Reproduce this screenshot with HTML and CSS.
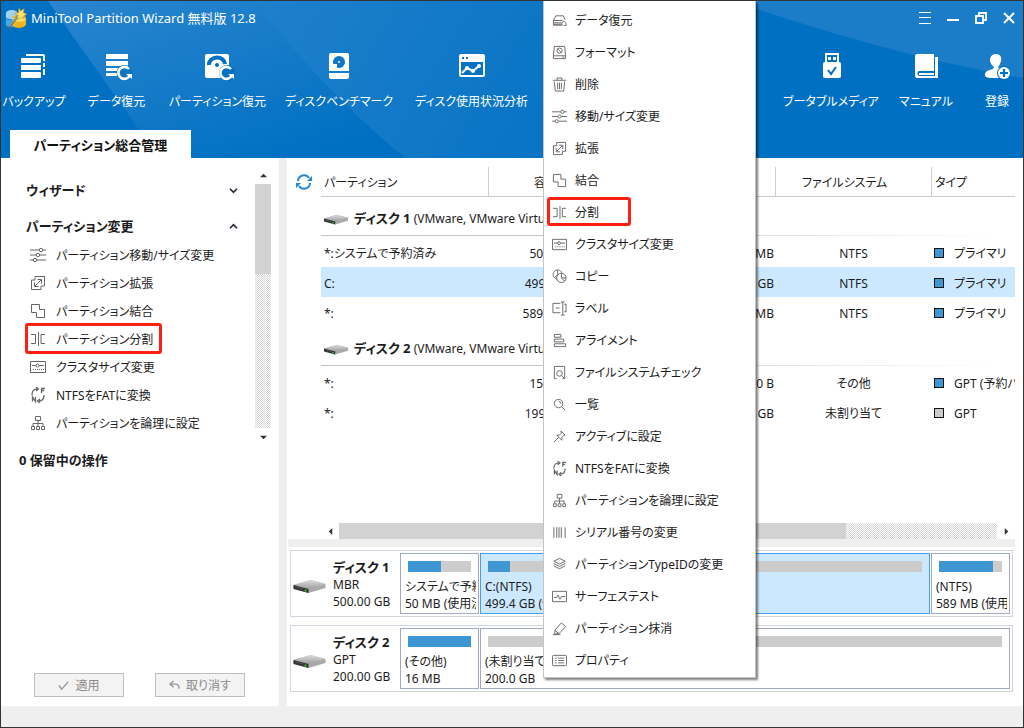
FILE: index.html
```html
<!DOCTYPE html>
<html lang="ja">
<head>
<meta charset="utf-8">
<title>MiniTool Partition Wizard 無料版 12.8</title>
<link rel="stylesheet" href="styles.css">
</head>
<body>
<svg class="defs" aria-hidden="true">
  <defs>
    <linearGradient id="ray-a" x1="0" y1="0" x2="0.7" y2="1"><stop offset="0" stop-color="#2a85cf"/><stop offset="1" stop-color="#0070c2"/></linearGradient>
    <linearGradient id="ray-b" x1="0" y1="0" x2="1" y2="0.2"><stop offset="0" stop-color="#1f80cc"/><stop offset="1" stop-color="#0070c2"/></linearGradient>
    <linearGradient id="metal" x1="0" y1="0" x2="0" y2="1"><stop offset="0" stop-color="#dedede"/><stop offset="1" stop-color="#9c9c9c"/></linearGradient>
  </defs>
  <symbol id="i-drive" viewBox="0 0 32 14"><path d="M0 5 17 0l15 4v4l-17 5L0 8z" fill="#a9a9a9"/><path d="M0 5 17 0l15 4-17 5z" fill="url(#metal)"/><path d="M0 5l15 4v4L0 9z" fill="#343434"/><path d="M2 7l8 2" stroke="#555"/><path d="M12 9.500v2" stroke="#38e038" stroke-width="1.500"/></symbol>
  <symbol id="i-restore" viewBox="0 0 16 16"><path d="M1.500 8 4 3h8l2 4M1.500 8v5H11M1.500 8H11M2 10.500h8M2 12h8M12.500 13.500l2.500-.5M15 13c.5-2-.5-4-2.500-4S10 11 11 13"/></symbol>
  <symbol id="i-format" viewBox="0 0 16 16"><path d="M2.500 1.500h11l1 9.500v3.500h-13V11zM1.500 11.500h13M11 13h2"/><circle cx="8" cy="6" r="2.800"/><path d="M6 4l4 4"/></symbol>
  <symbol id="i-trash" viewBox="0 0 16 16"><path d="M1 3.500h14M5.500 3.500V1h5v2.500M2.500 5l1 10h9l1-10M6 6v7M8 6v7M10 6v7"/></symbol>
  <symbol id="i-sliders" viewBox="0 0 16 16"><path d="M0 3h9M13 3h3M0 8h6M10 8h6M0 13h3M7 13h9"/><circle cx="11" cy="3" r="1.700"/><circle cx="8" cy="8" r="1.700"/><circle cx="5" cy="13" r="1.700"/></symbol>
  <symbol id="i-extend" viewBox="0 0 16 16"><path d="M5 5V1.500h9.500V11H11M5 5H1.500v9.500H11V11M5 11l6-6M7.500 4.500h4v4M4.500 7.500v4h4"/></symbol>
  <symbol id="i-merge" viewBox="0 0 16 16"><path d="M1.500 1.500h8v5h5v8h-8v-5h-5z"/></symbol>
  <symbol id="i-split" viewBox="0 0 16 16"><path d="M1 3.500h4.500v9H1M8.500 1v14M15 3.500h-4v9h4"/></symbol>
  <symbol id="i-cluster" viewBox="0 0 16 16"><path d="M.5 2.500h15v11H.5zM2 6.500h4M9 6.500h5"/><circle cx="7.500" cy="6.500" r="1.500"/><path d="M3 10.500h11" stroke-dasharray="1 1"/></symbol>
  <symbol id="i-copy" viewBox="0 0 16 16"><path d="M5 10.500A4.800 4.800 0 1 1 10.500 4M6 1v5L3 9"/><circle cx="10" cy="9.500" r="5"/><path d="M10 4.500v5h5M10 9.500l3.500 3.500"/></symbol>
  <symbol id="i-label" viewBox="0 0 16 16"><path d="M9 2.500H1v10h8M4 7.500h4M11.500 1v14M9.500 1h4M9.500 15h4M13 3.500h2v8h-2"/></symbol>
  <symbol id="i-align" viewBox="0 0 16 16"><path d="M2.500 1.500h7v3h-7zM2.500 6.500h10v3h-10zM2.500 11.500h12v3h-12z"/></symbol>
  <symbol id="i-fscheck" viewBox="0 0 16 16"><path d="M5 14.500H2.500v-13h11v13H11"/><circle cx="8" cy="9" r="3"/><path d="M10 11l3 3"/></symbol>
  <symbol id="i-search" viewBox="0 0 16 16"><circle cx="7" cy="7" r="4.500"/><path d="M10.500 10.500l3.500 3.500M7 4.500A3 3 0 0 1 9.500 7"/></symbol>
  <symbol id="i-pin" viewBox="0 0 16 16"><path d="M9.500 2l4.500 4.500-1.500.5-2 2v3L5 6.500h3l2-2zM7 9l-5 5"/></symbol>
  <symbol id="i-convert" viewBox="0 0 16 16"><path d="M2 8c0-4 2-6 5-6M6 0l2.500 2L6 4M14 8c0 4-2 6-5 6M10 12l-2.500 2L10 16M11.500 6V1.500H15M11.500 3.500H14M2.500 14.500V10l3 4.500V10" stroke-width="1.300"/></symbol>
  <symbol id="i-tree" viewBox="0 0 16 16"><path d="M5.500 1.500h5v4h-5zM8 5.500V8M3 11V8.500h10V11M8 8v3M1.500 11.500h3v3h-3zM6.500 11.500h3v3h-3zM11.500 11.500h3v3h-3z"/></symbol>
  <symbol id="i-barcode" viewBox="0 0 16 16"><path d="M2 2.500v11M5 2.500v11M7.500 2.500v11M10 2.500v11M14 2.500v11" stroke="#888" stroke-width="1.300"/></symbol>
  <symbol id="i-layers" viewBox="0 0 16 16"><path d="M8 1.500l6 3-6 3-6-3zM2 7l6 3 6-3M2 9.500l6 3 6-3"/></symbol>
  <symbol id="i-surface" viewBox="0 0 16 16"><path d="M.5 2.500h15v11H.5zM2 9h3l1.500-2.500L8.500 11 10 8h4"/></symbol>
  <symbol id="i-wipe" viewBox="0 0 16 16"><path d="M1 14.500h8M3 10l7-8 4.500 4-6.500 7-5 1zM3 10l4.500 3.500"/></symbol>
  <symbol id="i-props" viewBox="0 0 16 16"><rect x=".5" y="2.500" width="15" height="11" rx="1"/><path d="M3 5.500h2M6.500 5.500H13M3 8h2M6.500 8H13M3 10.500h2M6.500 10.500H13"/></symbol>
</svg>

<div class="window">
  <header class="header">
    <svg class="header-art" viewBox="0 0 1022 157" preserveAspectRatio="none" aria-hidden="true">
      <path d="M47 0H254L300 55 404 157H158z" fill="url(#ray-a)"/>
      <path d="M254 0H720V157H404C350 112 296 57 254 0z" fill="url(#ray-b)"/>
      <path d="M720 0H1022V77C930 61 840 37 720 -4z" fill="#1b7dc8"/>
    </svg>
    <div class="titlebar">
      <svg class="logo" viewBox="0 0 24 24" aria-hidden="true"><path d="M1 7c0-4 9-5 12-2v8c-4 2-12 0-12-2z" fill="#9fd2f3"/><path d="M1 12c3 3 6 3 9 0v9c-3 2-9 1-9-2z" fill="#42a9ea"/><path d="M8 12c0-4 14-5 15 0v7c-2 5-13 5-15 1z" fill="#eab521"/><path d="M8 13c3-3 12-3 15 0-2 4-12 4-15 0z" fill="#fbe06a"/><path d="M3 23 16 8" stroke="#526b70" stroke-width="2.400"/><path d="M4 21 16 8" stroke="#eef" stroke-width=".8"/><path d="M15 1l2 3 4-2-1 4 4 2-4 2 1 3-3-2-4 3 0-5-4-2 5-1z" fill="#ffe267" stroke="#b58d28" stroke-width=".6"/></svg>
      <h1 class="app-title">MiniTool Partition Wizard 無料版 12.8</h1>
      <div class="win-controls">
        <button class="win-btn" aria-label="メニュー"><svg viewBox="0 0 12 12"><path d="M0 .5h12M0 5.500h12M0 11.500h12"/></svg></button>
        <button class="win-btn" aria-label="最小化"><svg viewBox="0 0 12 12"><path d="M0 8h12" stroke-width="2"/></svg></button>
        <button class="win-btn" aria-label="元に戻す"><svg viewBox="0 0 12 12"><path d="M1 4h7v7H1zM4 4V1h7v7H8" stroke-width="1.800"/></svg></button>
        <button class="win-btn" aria-label="閉じる"><svg viewBox="0 0 12 12"><path d="M1 1l10 10M11 1L1 11" stroke-width="2"/></svg></button>
      </div>
    </div>
    <div class="toolbar">
      <div class="tools tools-main">
        <button class="tool"><svg viewBox="0 0 28 28"><g fill="#fff"><path d="M6 1h17q2 0 2 2v19h-2V3H6z"/><rect x="1" y="5" width="20" height="5" rx="1"/><rect x="1" y="12" width="20" height="5"/><rect x="1" y="19" width="20" height="6" rx="1"/></g><path d="M22 9h4M22 15h4" stroke="#0070c2" stroke-width="2"/></svg>バックアップ</button>
        <button class="tool"><svg viewBox="0 0 28 28"><g fill="#fff"><path d="M3 1h22v5H3zM3 8h22v5H3zM3 15h13v3H3zM3 20h11v3H3z"/></g><circle cx="21.500" cy="20" r="8" fill="#0c76c6"/><path d="M26 16a6 6 0 1 0 1 6" fill="none" stroke="#fff" stroke-width="2.600"/><path d="M23 21h6v5z" fill="#fff"/></svg>データ復元</button>
        <button class="tool"><svg viewBox="0 0 28 28"><rect x="1" y="1" width="24" height="24" rx="2" fill="#fff"/><path d="M5 12a8 7 0 0 1 16-1" fill="none" stroke="#0070c2" stroke-width="4"/><circle cx="13" cy="12" r="2" fill="#0070c2"/><circle cx="23" cy="20" r="8" fill="#0070c2"/><path d="M27 16a6 6 0 1 0 1 6" fill="none" stroke="#fff" stroke-width="2.600"/><path d="M24 21h6v5z" fill="#fff"/></svg>パーティション復元</button>
        <button class="tool"><svg viewBox="0 0 28 28"><path d="M6 0h16q2 0 2 2v16H4V2q0-2 2-2zM4 20h20v4q0 2-2 2H6q-2 0-2-2z" fill="#fff"/><circle cx="14" cy="9" r="6" fill="#0f77c7"/><circle cx="14" cy="9" r="1" fill="#fff"/><path d="M7 16v-5h5v3l-2 2z" fill="#fff"/></svg>ディスクベンチマーク</button>
        <button class="tool"><svg viewBox="0 0 28 28"><path d="M3 1h22q2 0 2 2v19q0 2-2 2H3q-2 0-2-2V3q0-2 2-2z" fill="#fff"/><path d="M4 4h2v2H4zM8 4h2v2H8zM3 9h22v13H3z" fill="#0872c4"/><path d="M4 20l5-5 6 3 6-5" fill="none" stroke="#fff" stroke-width="2.200"/><circle cx="9" cy="15" r="2" fill="#fff"/><circle cx="15" cy="18" r="2" fill="#fff"/><circle cx="21" cy="13" r="2" fill="#fff"/></svg>ディスク使用状況分析</button>
      </div>
      <div class="tools tools-side">
        <button class="tool"><svg viewBox="0 0 28 28"><path d="M8 0h14v9H8z" fill="#fff"/><path d="M10 2h10v7H10z" fill="#0070c2"/><path d="M11 4h3v3h-3zM16 4h3v3h-3z" fill="#fff"/><rect x="6" y="9" width="18" height="16" rx="2" fill="#fff"/><path d="M11 17l3 4 5-7" fill="none" stroke="#0070c2" stroke-width="2"/></svg>ブータブルメディア</button>
        <button class="tool"><svg viewBox="0 0 28 28"><path d="M5 1h17v17H7q-3 2 0 4h16V4h3v21H5q-2 0-2-3V3q0-2 2-2z" fill="#fff"/><path d="M7 18h16v5H7q-3-2 0-5z" fill="#0070c2"/><path d="M7 20h15v2H7z" fill="#fff"/></svg>マニュアル</button>
        <button class="tool"><svg viewBox="0 0 28 28"><path d="M13 1c4 0 6 3 5 7q-1 4-3 6c1 2 5 1 8 4v7H8c-8 0-7-5-4-7 3-1 7-2 7-4Q7 11 7 7c0-4 3-6 6-6z" fill="#fff"/><circle cx="21" cy="20" r="7" fill="#0070c2"/><circle cx="21" cy="20" r="6" fill="#fff"/><path d="M21 16v8M17 20h8" stroke="#0070c2" stroke-width="2.200"/></svg>登録</button>
      </div>
    </div>
    <div class="tab">パーティション総合管理</div>
  </header>

  <div class="body">
    <aside class="sidebar">
      <div class="tree">
        <nav class="tree-list">
          <button class="tree-head">ウィザード<svg viewBox="0 0 8 8"><path d="M0 2l4 4 4-4"/></svg></button>
          <button class="tree-head">パーティション変更<svg viewBox="0 0 8 8"><path d="M0 6l4-4 4 4"/></svg></button>
          <ul class="tree-items">
            <li><a href="#"><svg class="icon"><use href="#i-sliders"/></svg>パーティション移動/サイズ変更</a></li>
            <li><a href="#"><svg class="icon"><use href="#i-extend"/></svg>パーティション拡張</a></li>
            <li><a href="#"><svg class="icon"><use href="#i-merge"/></svg>パーティション結合</a></li>
            <li><a href="#" class="marked"><svg class="icon"><use href="#i-split"/></svg>パーティション分割</a></li>
            <li><a href="#"><svg class="icon"><use href="#i-cluster"/></svg>クラスタサイズ変更</a></li>
            <li><a href="#"><svg class="icon"><use href="#i-convert"/></svg>NTFSをFATに変換</a></li>
            <li><a href="#"><svg class="icon"><use href="#i-tree"/></svg>パーティションを論理に設定</a></li>
          </ul>
        </nav>
        <div class="scroll scroll-v">
          <button class="arrow" aria-label="上へ"><svg viewBox="0 0 8 8"><path d="M0 6l4-4 4 4z"/></svg></button>
          <div class="track"><div class="thumb"></div></div>
          <button class="arrow" aria-label="下へ"><svg viewBox="0 0 8 8"><path d="M0 2l4 4 4-4z"/></svg></button>
        </div>
      </div>
      <h2 class="pending">0 保留中の操作</h2>
      <div class="actions">
        <button class="action" disabled><svg viewBox="0 0 12 12"><path d="M1 6l3 4 7-8"/></svg>適用</button>
        <button class="action" disabled><svg viewBox="0 0 12 12"><path d="M5 1L1 4.500 5 8M1 4.500h6q4 0 4 5"/></svg>取り消す</button>
      </div>
    </aside>

    <main class="main">
      <div class="grid-area">
        <button class="refresh" aria-label="更新"><svg viewBox="0 0 16 16"><path d="M2 7a6 6 0 0 1 11-3M14 9a6 6 0 0 1-11 3"/><path d="M16 2v5h-5zM0 14V9h5z" class="solid"/></svg></button>
        <table class="parts">
          <colgroup><col class="c-name"><col class="c-cap"><col class="c-used"><col class="c-free"><col class="c-fs"><col></colgroup>
          <thead><tr><th>パーティション</th><th class="mid">容量</th><th class="mid">使用済み</th><th class="mid">未使用</th><th class="fs-head">ファイルシステム</th><th>タイプ</th></tr></thead>
          <tbody>
            <tr class="disk-row"><td colspan="6"><svg class="drive-sm"><use href="#i-drive"/></svg><b>ディスク 1</b> (VMware, VMware Virtual S SAS, MBR, 500.00 GB)</td></tr>
            <tr><td>*:システムで予約済み</td><td class="cap">50 MB</td><td class="num">29 MB</td><td class="num">21 MB</td><td class="mid">NTFS</td><td><i class="sq"></i>プライマリ</td></tr>
            <tr class="selected"><td>C:</td><td class="cap">499 GB</td><td class="num">24 GB</td><td class="num">475 GB</td><td class="mid">NTFS</td><td><i class="sq"></i>プライマリ</td></tr>
            <tr><td>*:</td><td class="cap">589 MB</td><td class="num">505 MB</td><td class="num">84 MB</td><td class="mid">NTFS</td><td><i class="sq"></i>プライマリ</td></tr>
            <tr class="disk-row"><td colspan="6"><svg class="drive-sm"><use href="#i-drive"/></svg><b>ディスク 2</b> (VMware, VMware Virtual S SAS, GPT, 200.00 GB)</td></tr>
            <tr><td>*:</td><td class="cap">15 MB</td><td class="num">15 MB</td><td class="num">0 B</td><td class="mid">その他</td><td><i class="sq"></i>GPT (予約パーティション)</td></tr>
            <tr><td>*:</td><td class="cap">199 GB</td><td class="num">0 B</td><td class="num">199 GB</td><td class="mid">未割り当て</td><td><i class="sq sq-gray"></i>GPT</td></tr>
          </tbody>
        </table>
      </div>
      <div class="scroll scroll-h">
        <button class="arrow" aria-label="左へ"><svg viewBox="0 0 8 8"><path d="M6 0L2 4l4 4z"/></svg></button>
        <div class="track"><div class="thumb"></div></div>
        <button class="arrow" aria-label="右へ"><svg viewBox="0 0 8 8"><path d="M2 0l4 4-4 4z"/></svg></button>
      </div>
      <div class="divider"></div>
      <div class="maps">
        <section class="map">
          <svg class="drive"><use href="#i-drive"/></svg>
          <div class="map-info"><b>ディスク 1</b><span>MBR</span><span>500.00 GB</span></div>
          <div class="block"><div class="bar"><div class="fill" style="width:52%"></div></div><span>システムで予約済み</span><span>50 MB (使用済み: 58%)</span></div>
          <div class="block wide active"><div class="bar"><div class="fill" style="width:5%"></div></div><span>C:(NTFS)</span><span>499.4 GB (使用済み: 4%)</span></div>
          <div class="block"><div class="bar"><div class="fill" style="width:86%"></div></div><span>(NTFS)</span><span>589 MB (使用済み: 85%)</span></div>
        </section>
        <section class="map">
          <svg class="drive"><use href="#i-drive"/></svg>
          <div class="map-info"><b>ディスク 2</b><span>GPT</span><span>200.00 GB</span></div>
          <div class="block"><div class="bar"><div class="fill" style="width:100%"></div></div><span>(その他)</span><span>16 MB</span></div>
          <div class="block wide"><div class="bar"></div><span>(未割り当て)</span><span>200.0 GB</span></div>
        </section>
      </div>
    </main>
  </div>
  <footer class="status"></footer>

  <div class="context" role="menu">
    <button role="menuitem"><svg class="icon"><use href="#i-restore"/></svg>データ復元</button>
    <button role="menuitem"><svg class="icon"><use href="#i-format"/></svg>フォーマット</button>
    <button role="menuitem"><svg class="icon"><use href="#i-trash"/></svg>削除</button>
    <button role="menuitem"><svg class="icon"><use href="#i-sliders"/></svg>移動/サイズ変更</button>
    <button role="menuitem"><svg class="icon"><use href="#i-extend"/></svg>拡張</button>
    <button role="menuitem"><svg class="icon"><use href="#i-merge"/></svg>結合</button>
    <button role="menuitem" class="marked"><svg class="icon"><use href="#i-split"/></svg>分割</button>
    <button role="menuitem"><svg class="icon"><use href="#i-cluster"/></svg>クラスタサイズ変更</button>
    <button role="menuitem"><svg class="icon"><use href="#i-copy"/></svg>コピー</button>
    <button role="menuitem"><svg class="icon"><use href="#i-label"/></svg>ラベル</button>
    <button role="menuitem"><svg class="icon"><use href="#i-align"/></svg>アライメント</button>
    <button role="menuitem"><svg class="icon"><use href="#i-fscheck"/></svg>ファイルシステムチェック</button>
    <button role="menuitem"><svg class="icon"><use href="#i-search"/></svg>一覧</button>
    <button role="menuitem"><svg class="icon"><use href="#i-pin"/></svg>アクティブに設定</button>
    <button role="menuitem"><svg class="icon"><use href="#i-convert"/></svg>NTFSをFATに変換</button>
    <button role="menuitem"><svg class="icon"><use href="#i-tree"/></svg>パーティションを論理に設定</button>
    <button role="menuitem"><svg class="icon"><use href="#i-barcode"/></svg>シリアル番号の変更</button>
    <button role="menuitem"><svg class="icon"><use href="#i-layers"/></svg>パーティションTypeIDの変更</button>
    <button role="menuitem"><svg class="icon"><use href="#i-surface"/></svg>サーフェステスト</button>
    <button role="menuitem"><svg class="icon"><use href="#i-wipe"/></svg>パーティション抹消</button>
    <button role="menuitem"><svg class="icon"><use href="#i-props"/></svg>プロパティ</button>
  </div>
</div>
</body>
</html>
```
FILE: styles.css
```css
*, *::after { box-sizing: border-box; }
body {
  margin: 0;
  font: 12px/17px "Noto Sans", "Noto Sans CJK JP", sans-serif;
  font-feature-settings: "palt";
  color: #1c1c1c;
}
button { font: inherit; font-feature-settings: inherit; color: inherit; background: none; border: 0; padding: 0; white-space: nowrap; }
a { color: inherit; text-decoration: none; }
.defs { position: absolute; width: 0; height: 0; }
.icon { width: 16px; height: 16px; flex: none; fill: none; stroke: #666; stroke-width: 1; }

.window { position: relative; display: flex; flex-direction: column; height: 100vh; border: 1px solid #333; background: #fff; overflow: hidden; }

/* Header */
.header { position: relative; flex: none; display: flex; flex-direction: column; background: #0070c2; color: #fff; }
.header-art { position: absolute; inset: 0; width: 100%; height: 100%; }
.titlebar, .toolbar, .tab { position: relative; }
.titlebar { display: flex; align-items: center; height: 33px; padding-left: 4px; }
.logo { width: 22px; height: 22px; }
.app-title { flex: 1; margin: 2px 0 0 4px; font-size: 13px; font-weight: 400; }
.win-controls { display: flex; }
.win-btn { width: 28px; height: 32px; display: grid; place-items: center; }
.win-btn svg { width: 12px; height: 12px; fill: none; stroke: #fff; stroke-width: 1; overflow: visible; }
.toolbar { display: flex; justify-content: space-between; height: 96px; padding: 19px 6px 0 5px; }
.tools { display: grid; align-content: start; }
.tools-main { grid-template-columns: 56px 57px 93px 98px 115px; column-gap: 26px; }
.tools-side { grid-template-columns: 88px 50px 40px; column-gap: 26px; }
.tool { display: flex; flex-direction: column; align-items: center; gap: 12px; line-height: 17px; }
.tool svg { width: 28px; height: 28px; overflow: visible; }
.tab { align-self: flex-start; width: 181px; height: 28px; margin-left: 9px; background: #fff; color: #111; font-size: 13px; font-weight: 700; line-height: 30px; text-align: center; }

/* Sidebar */
.body { flex: 1; display: flex; min-height: 0; }
.sidebar { width: 286px; flex: none; display: flex; flex-direction: column; padding: 8px 0 9px; border-right: 8px solid #efefef; }
.tree { display: flex; justify-content: space-between; height: 280px; }
.tree-list { flex: 1; display: flex; flex-direction: column; padding: 9px 18px 0 25px; }
.tree-head { display: flex; justify-content: space-between; align-items: center; height: 30px; margin-bottom: 6px; font-size: 13px; font-weight: 700; }
.tree-head:nth-child(2) { margin-bottom: 0; }
.tree-head svg { width: 7px; height: 7px; fill: none; stroke: #222b36; stroke-width: 2; overflow: visible; }
.tree-items { list-style: none; margin: 0; padding: 0; }
.tree-items a { position: relative; display: flex; align-items: center; gap: 10px; height: 28px; padding-left: 4px; white-space: nowrap; }
.marked::after { content: ""; position: absolute; border: 3px solid #ff2012; border-radius: 3px; }
.tree-items .marked::after { left: -1px; top: -2px; width: 137px; height: 31px; }
.pending { margin: 5px 0 0 18px; font-size: 13px; line-height: 18px; }
.actions { display: flex; gap: 31px; margin-top: auto; padding-left: 33px; }
.action { display: flex; align-items: center; justify-content: center; gap: 6px; width: 90px; height: 24px; border: 1px solid #bfbfbf; background: #f3f3f3; color: #8a8a8a; }
.action svg { width: 11px; height: 11px; fill: none; stroke: #999; stroke-width: 1.5; }

/* Scroll bars */
.scroll { display: flex; }
.scroll .arrow { display: grid; place-items: center; width: 16px; height: 18px; }
.arrow svg { width: 7px; height: 7px; fill: #333; }
.track { flex: 1; background: repeating-conic-gradient(#d6d6d6 0 25%, #fff 0 50%) 0 0 / 2px 2px; }
.thumb { background: #d2d2d2; }
.scroll-v { flex-direction: column; width: 16px; margin-right: 8px; }
.scroll-v .thumb { height: 37%; }
.scroll-h { height: 16px; padding: 0 0 0 33px; }
.scroll-h .arrow { width: 18px; height: 16px; }
.scroll-h .thumb { width: 77%; height: 100%; }

/* Partition table */
.main { flex: 1; min-width: 0; display: flex; flex-direction: column; padding: 9px 8px 14px 1px; }
.grid-area { flex: 1; min-height: 0; display: grid; grid-template-columns: 33px 1fr; align-items: start; }
.refresh { height: 30px; display: grid; place-items: center; padding-right: 2px; }
.refresh svg { width: 16px; height: 16px; fill: none; stroke: #2588d8; stroke-width: 2; }
.refresh .solid { fill: #2588d8; stroke: none; }
.parts { width: 100%; table-layout: fixed; border-collapse: separate; border-spacing: 0; }
.c-name { width: 168px; }
.c-cap { width: 116px; }
.c-used { width: 85px; }
.c-free { width: 86px; }
.c-fs { width: 156px; }
.parts th, .parts td { padding: 0 4px 0 3px; overflow: hidden; white-space: nowrap; text-align: left; font-weight: 400; }
.parts th { height: 30px; padding-top: 2px; border-right: 1px solid #cfcfcf; border-bottom: 1px solid #c9c9c9; }
.parts th:last-child { border-right: 0; }
.parts td { height: 30px; padding-top: 2px; }
.parts td:last-child { padding-left: 2px; padding-right: 0; }
.parts .mid { text-align: center; }
.parts .fs-head { padding-left: 26px; }
.parts .cap { text-align: right; padding-right: 40px; }
.parts .num { text-align: right; padding-right: 2px; }
.parts .disk-row td { height: 40px; padding: 2px 3px 0; background: linear-gradient(90deg, #c4c4c4 30%, #fff 98%) 0 38px / 100% 1px no-repeat; }
.parts .disk-row b { font-size: 13px; }
.drive-sm { width: 24px; height: 12px; margin-right: 6px; vertical-align: -3px; }
.selected td { background: #cce8ff; }
.sq { display: inline-block; width: 10px; height: 10px; margin-right: 10px; border: 1px solid #111; background: #3e96d2; }
.sq-gray { background: #ccc; }
.divider { height: 8px; background: #efefef; }

/* Disk maps */
.maps { display: flex; flex-direction: column; gap: 8px; padding: 3px 2px 0; }
.map { display: flex; gap: 1px; height: 67px; padding: 2px; border: 1px solid #d2d5e0; }
.drive { width: 33px; height: 14px; flex: none; align-self: center; margin-top: 6px; }
.map-info { display: flex; flex-direction: column; width: 72px; flex: none; padding: 6px 0 0 6px; }
.map-info b { font-size: 13px; }
.block { display: flex; flex-direction: column; width: 79px; flex: none; padding: 7px 2px 0 4px; border: 1px solid #9fa9c1; white-space: nowrap; }
.block span { overflow: hidden; }
.block.wide { flex: 1; min-width: 0; }
.block.active { background: #cce8ff; border-color: #42a0ee; }
.bar { height: 11px; margin: 0 5px 6px 3px; background: #ccc; flex: none; }
.fill { height: 100%; background: #3e96d2; }
.status { flex: none; height: 21px; background: #efefef; }

/* Context menu */
.context { position: absolute; left: 542px; top: 0; display: flex; flex-direction: column; width: 213px; padding: 3px 0 1px; background: #fff; border: solid #c4c4c4; border-width: 0 1px 1px; box-shadow: 2px 2px 2px rgba(0, 0, 0, .5); }
.context button { position: relative; display: flex; align-items: center; gap: 8px; height: 32px; padding-left: 8px; text-align: left; }
.context .icon { width: 15px; height: 15px; }
.context .marked::after { left: 3px; top: 1px; width: 84px; height: 29px; }
```
